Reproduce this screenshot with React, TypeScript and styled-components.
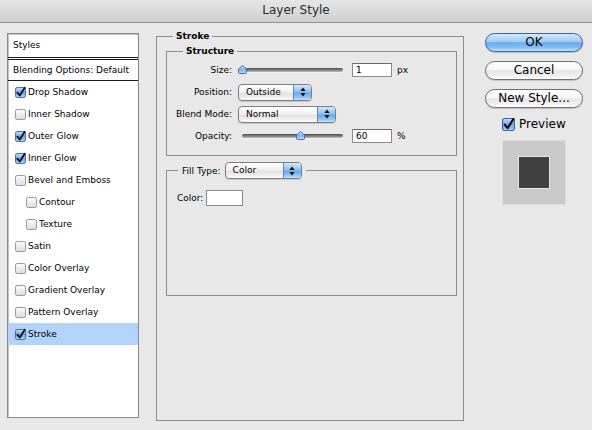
import React from 'react'
import styled, { createGlobalStyle } from 'styled-components'

const GlobalStyle = createGlobalStyle`
	html, body {
		margin: 0;
		padding: 0;
		background: #e8e8e8;
	}
	body {
		font-family: 'DejaVu Sans', 'Liberation Sans', sans-serif;
		font-size: 9px;
		color: #000;
	}
`

type StyleItem = { name: string; checked: boolean; nested?: boolean }

const styleItems: StyleItem[] = [
	{ name: 'Drop Shadow', checked: true },
	{ name: 'Inner Shadow', checked: false },
	{ name: 'Outer Glow', checked: true },
	{ name: 'Inner Glow', checked: true },
	{ name: 'Bevel and Emboss', checked: false },
	{ name: 'Contour', checked: false, nested: true },
	{ name: 'Texture', checked: false, nested: true },
	{ name: 'Satin', checked: false },
	{ name: 'Color Overlay', checked: false },
	{ name: 'Gradient Overlay', checked: false },
	{ name: 'Pattern Overlay', checked: false },
	{ name: 'Stroke', checked: true },
]

const CheckBox = ({ checked, size = 11 }: { checked: boolean; size?: number }) => {
	const id = `cb-${checked ? 'on' : 'off'}-${size}`
	return (
		<svg width={size} height={size} viewBox="0 0 12 12" style={{ flex: 'none', overflow: 'visible' }}>
			<defs>
				<linearGradient id={id} x1="0" y1="0" x2="0" y2="1">
					{checked ? (
						<>
							<stop offset="0" stopColor="#c9e1fa" />
							<stop offset="0.5" stopColor="#6fa8e8" />
							<stop offset="1" stopColor="#a9d2fb" />
						</>
					) : (
						<>
							<stop offset="0" stopColor="#ffffff" />
							<stop offset="0.5" stopColor="#ececec" />
							<stop offset="1" stopColor="#dcdcdc" />
						</>
					)}
				</linearGradient>
			</defs>
			<rect
				x="0.5"
				y="0.5"
				width="11"
				height="11"
				rx="2"
				fill={`url(#${id})`}
				stroke={checked ? '#3c64a0' : '#8e8e8e'}
			/>
			{checked && (
				<path d="M2.6 6.2 L5.2 9.3 L10.6 0.8" fill="none" stroke="#111" strokeWidth="2" strokeLinecap="round" strokeLinejoin="round" />
			)}
		</svg>
	)
}

const Slider = ({ value }: { value: number }) => (
	<SliderWrap>
		<SliderTrack />
		<SliderThumb style={{ left: `${value * 97}px` }}>
			<svg width="9" height="9" viewBox="0 0 9 9">
				<defs>
					<linearGradient id="thumb" x1="0" y1="0" x2="0" y2="1">
						<stop offset="0" stopColor="#d8ebfd" />
						<stop offset="0.5" stopColor="#7fb4ec" />
						<stop offset="1" stopColor="#b6d8fb" />
					</linearGradient>
				</defs>
				<path d="M0.5 4 L4.5 0.6 L8.5 4 L8.5 7.5 Q8.5 8.5 7.5 8.5 L1.5 8.5 Q0.5 8.5 0.5 7.5 Z" fill="url(#thumb)" stroke="#4a6fa5" />
			</svg>
		</SliderThumb>
	</SliderWrap>
)

const Select = ({ value, width }: { value: string; width: number }) => (
	<SelectBox $width={width}>
		<SelectText>{value}</SelectText>
		<SelectArrows>
			<svg width="6" height="10" viewBox="0 0 6 10">
				<path d="M3 0.5 L5.6 4 L0.4 4 Z" fill="#111" />
				<path d="M3 9.5 L5.6 6 L0.4 6 Z" fill="#111" />
			</svg>
		</SelectArrows>
	</SelectBox>
)

export default function App() {
	return (
		<Window>
			<GlobalStyle />
			<TitleBar>Layer Style</TitleBar>
			<Body>
				<StylesPanel>
					<PanelHeader>Styles</PanelHeader>
					<BlendingRow>Blending Options: Default</BlendingRow>
					{styleItems.map((item) => (
						<StyleRow key={item.name} $nested={!!item.nested} $selected={item.name === 'Stroke'}>
							<CheckBox checked={item.checked} />
							<span>{item.name}</span>
						</StyleRow>
					))}
				</StylesPanel>

				<OuterGroup>
					<GroupLegend>Stroke</GroupLegend>
					<InnerGroup>
						<GroupLegend>Structure</GroupLegend>
						<FieldRow>
							<FieldLabel>Size:</FieldLabel>
							<Slider value={0} />
							<NumberField readOnly value="1" />
							<Unit>px</Unit>
						</FieldRow>
						<FieldRow>
							<FieldLabel>Position:</FieldLabel>
							<Select value="Outside" width={74} />
						</FieldRow>
						<FieldRow>
							<FieldLabel>Blend Mode:</FieldLabel>
							<Select value="Normal" width={98} />
						</FieldRow>
						<FieldRow>
							<FieldLabel>Opacity:</FieldLabel>
							<Slider value={0.6} />
							<NumberField readOnly value="60" />
							<Unit>%</Unit>
						</FieldRow>
					</InnerGroup>

					<FillGroup>
						<FillLegend>
							<span>Fill Type:</span>
							<Select value="Color" width={77} />
						</FillLegend>
						<ColorRow>
							<span>Color:</span>
							<ColorSwatch />
						</ColorRow>
					</FillGroup>
				</OuterGroup>

				<Actions>
					<PillButton $primary>OK</PillButton>
					<PillButton>Cancel</PillButton>
					<PillButton>New Style...</PillButton>
					<PreviewToggle>
						<CheckBox checked size={13} />
						<span>Preview</span>
					</PreviewToggle>
					<PreviewWell>
						<PreviewSquare />
					</PreviewWell>
				</Actions>
			</Body>
		</Window>
	)
}

const Window = styled.div`
	width: 592px;
	height: 430px;
	overflow: hidden;
	background: #e8e8e8;
`

const TitleBar = styled.div`
	height: 22px;
	line-height: 21px;
	text-align: center;
	font-size: 12px;
	color: #2b2b2b;
	background: linear-gradient(#e6e6e6, #cfcfcf);
	border-bottom: 1px solid #8f8f8f;
`

const Body = styled.div`
	display: flex;
	align-items: flex-start;
	padding-left: 7px;
`

const StylesPanel = styled.div`
	margin-top: 10px;
	width: 132px;
	height: 385px;
	box-sizing: border-box;
	background: #fff;
	border: 1px solid #8a8a8a;
	box-shadow: inset 1px 1px 0 #c4c4c4;
`

const PanelHeader = styled.div`
	height: 23px;
	line-height: 23px;
	padding-left: 5px;
	border-bottom: 3px double #1a1a1a;
`

const BlendingRow = styled.div`
	height: 20px;
	line-height: 20px;
	padding-left: 5px;
	border-bottom: 1px solid #1a1a1a;
`

const StyleRow = styled.div<{ $nested: boolean; $selected: boolean }>`
	display: flex;
	align-items: center;
	gap: 2px;
	height: 22px;
	padding-left: ${(p) => (p.$nested ? 18 : 7)}px;
	background: ${(p) => (p.$selected ? '#b4d3fb' : 'transparent')};
`

const OuterGroup = styled.fieldset`
	margin: 7px 0 0 17px;
	width: 308px;
	height: 391px;
	box-sizing: border-box;
	min-inline-size: 0;
	padding: 2px 6px 0 9px;
	border: 1px solid #8c8c8c;
	& > legend {
		margin-left: 7px;
	}
`

const GroupLegend = styled.legend`
	margin-left: 16px;
	padding: 0 3px;
	font-weight: bold;
	line-height: 13px;
`

const InnerGroup = styled.fieldset`
	margin: 0;
	min-inline-size: 0;
	padding: 1px 0 8px 0;
	border: 1px solid #8c8c8c;
`

const FieldRow = styled.div`
	display: flex;
	align-items: center;
	height: 22px;
`

const FieldLabel = styled.span`
	width: 65px;
	margin-right: 6px;
	text-align: right;
	flex: none;
`

const SliderWrap = styled.div`
	position: relative;
	width: 105px;
	height: 10px;
	flex: none;
`

const SliderTrack = styled.div`
	position: absolute;
	left: 4px;
	right: 0;
	top: 3px;
	height: 4px;
	border-radius: 3px;
	background: linear-gradient(#4a4a4a, #8a8a8a 60%, #bdbdbd);
	box-shadow: 0 1px 0 #f4f4f4;
`

const SliderThumb = styled.div`
	position: absolute;
	top: 0;
	width: 9px;
	height: 9px;
	display: flex;
`

const NumberField = styled.input`
	margin-left: 9px;
	width: 40px;
	height: 14px;
	box-sizing: border-box;
	padding: 0 3px;
	border: 1px solid #8a8a8a;
	border-top-color: #6a6a6a;
	background: #fff;
	font-family: 'DejaVu Sans', sans-serif;
	font-size: 9px;
	color: #000;
	outline: none;
`

const Unit = styled.span`
	margin-left: 5px;
`

const SelectBox = styled.div<{ $width: number }>`
	display: flex;
	width: ${(p) => p.$width}px;
	height: 17px;
	box-sizing: border-box;
	border: 1px solid #7e7e7e;
	border-radius: 4px;
	overflow: hidden;
	flex: none;
	background: linear-gradient(#ffffff, #f2f2f2 45%, #e2e2e2 55%, #f0f0f0 85%, #fbfbfb);
	box-shadow: 0 1px 1px rgba(0, 0, 0, 0.15);
`

const SelectText = styled.span`
	flex: 1;
	padding-left: 7px;
	line-height: 15px;
	white-space: nowrap;
`

const SelectArrows = styled.span`
	width: 17px;
	display: flex;
	align-items: center;
	justify-content: center;
	border-left: 1px solid #5f86bd;
	background: linear-gradient(#d2e7fc, #8fc0f1 45%, #6aa8ea 55%, #95c9f6 85%, #c4e2fd);
`

const FillGroup = styled.fieldset`
	margin: 6px 0 0 0;
	min-inline-size: 0;
	padding: 11px 0 89px 10px;
	border: 1px solid #8c8c8c;
`

const FillLegend = styled.legend`
	display: flex;
	align-items: center;
	gap: 4px;
	margin-left: 1px;
	padding: 0 4px;
`

const ColorRow = styled.div`
	display: flex;
	align-items: center;
	gap: 3px;
	height: 16px;
`

const ColorSwatch = styled.div`
	width: 37px;
	height: 16px;
	box-sizing: border-box;
	background: #fff;
	border: 1px solid #8a8a8a;
`

const Actions = styled.div`
	margin: 10px 0 0 21px;
	width: 98px;
	display: flex;
	flex-direction: column;
	align-items: stretch;
`

const PillButton = styled.div<{ $primary?: boolean }>`
	height: 19px;
	box-sizing: border-box;
	margin-bottom: 9px;
	border-radius: 10px;
	font-size: 12px;
	line-height: 17px;
	text-align: center;
	color: #000;
	border: 1px solid ${(p) => (p.$primary ? '#3f63a0' : '#707070')};
	background: ${(p) =>
		p.$primary
			? 'linear-gradient(#d3e8fd, #9fcaf6 45%, #6aa9ec 52%, #86bef3 80%, #c4e3ff)'
			: 'linear-gradient(#ffffff, #f6f6f6 45%, #e6e6e6 52%, #f0f0f0 80%, #ffffff)'};
	box-shadow: 0 1px 1px rgba(0, 0, 0, 0.18);
`

const PreviewToggle = styled.div`
	display: flex;
	align-items: center;
	gap: 4px;
	margin: 0 0 9px 17px;
	font-size: 12px;
	height: 14px;
`

const PreviewWell = styled.div`
	margin-left: 17px;
	width: 64px;
	height: 65px;
	box-sizing: border-box;
	background: #c9c9c9;
	border: 1px solid #dcdcdc;
	display: flex;
	align-items: center;
	justify-content: center;
`

const PreviewSquare = styled.div`
	width: 32px;
	height: 33px;
	box-sizing: border-box;
	background: #404040;
	border: 1px solid #e6e6e6;
`
